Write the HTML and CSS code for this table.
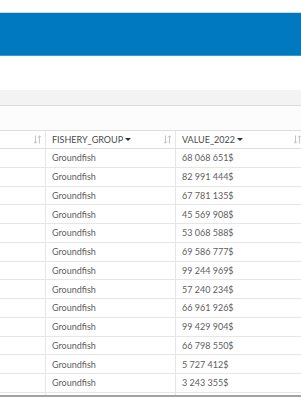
FILE: index.html
```html
<!DOCTYPE html>
<html lang="en">
<head>
    <meta charset="UTF-8">
    <meta name="viewport" content="width=device-width, initial-scale=1.0">
    <title>Table</title>
    <link rel="stylesheet" href="styles.css">
</head>
<body>
    <div class="top-gap"></div>
    <header class="app-bar"></header>
    <div class="spacer"></div>
    <div class="toolbar"></div>
    <div class="table-top"></div>

    <div class="grid">
        <div class="row head">
            <div class="cell c1"><span class="sort"><svg width="7" height="9" viewBox="0 0 7 9"><path d="M1.5 0.5v7.5M0 6.5l1.5 1.8 1.5-1.8M5.5 8.5V1M4 2.5l1.5-1.8 1.5 1.8" fill="none" stroke="#c4c4c4" stroke-width="1"/></svg></span></div>
            <div class="cell c2">FISHERY_GROUP<span class="caret"></span><span class="sort"><svg width="7" height="9" viewBox="0 0 7 9"><path d="M1.5 0.5v7.5M0 6.5l1.5 1.8 1.5-1.8M5.5 8.5V1M4 2.5l1.5-1.8 1.5 1.8" fill="none" stroke="#c4c4c4" stroke-width="1"/></svg></span></div>
            <div class="cell c3">VALUE_2022<span class="caret"></span><span class="sort"><svg width="7" height="9" viewBox="0 0 7 9"><path d="M1.5 0.5v7.5M0 6.5l1.5 1.8 1.5-1.8M5.5 8.5V1M4 2.5l1.5-1.8 1.5 1.8" fill="none" stroke="#c4c4c4" stroke-width="1"/></svg></span></div>
        </div>
        <div class="row"><div class="cell c1"></div><div class="cell c2">Groundfish</div><div class="cell c3">68 068 651$</div></div>
        <div class="row"><div class="cell c1"></div><div class="cell c2">Groundfish</div><div class="cell c3">82 991 444$</div></div>
        <div class="row"><div class="cell c1"></div><div class="cell c2">Groundfish</div><div class="cell c3">67 781 135$</div></div>
        <div class="row"><div class="cell c1"></div><div class="cell c2">Groundfish</div><div class="cell c3">45 569 908$</div></div>
        <div class="row"><div class="cell c1"></div><div class="cell c2">Groundfish</div><div class="cell c3">53 068 588$</div></div>
        <div class="row"><div class="cell c1"></div><div class="cell c2">Groundfish</div><div class="cell c3">69 586 777$</div></div>
        <div class="row"><div class="cell c1"></div><div class="cell c2">Groundfish</div><div class="cell c3">99 244 969$</div></div>
        <div class="row"><div class="cell c1"></div><div class="cell c2">Groundfish</div><div class="cell c3">57 240 234$</div></div>
        <div class="row"><div class="cell c1"></div><div class="cell c2">Groundfish</div><div class="cell c3">66 961 926$</div></div>
        <div class="row"><div class="cell c1"></div><div class="cell c2">Groundfish</div><div class="cell c3">99 429 904$</div></div>
        <div class="row"><div class="cell c1"></div><div class="cell c2">Groundfish</div><div class="cell c3">66 798 550$</div></div>
        <div class="row"><div class="cell c1"></div><div class="cell c2">Groundfish</div><div class="cell c3">5 727 412$</div></div>
        <div class="row"><div class="cell c1"></div><div class="cell c2">Groundfish</div><div class="cell c3">3 243 355$</div></div>
        <div class="row"><div class="cell c1"></div><div class="cell c2"></div><div class="cell c3"></div></div>
    </div>
</body>
</html>
```

FILE: styles.css
```css
body {
    margin: 0;
    background: #ffffff;
    font-family: 'Lato', 'Open Sans', sans-serif;
    color: #5e5e5e;
    overflow: hidden;
}

.top-gap {
    height: 12px;
}

.app-bar {
    height: 42px;
    background: #0079c1;
    border-top: 1px solid #c9dbe9;
    border-bottom: 1px solid #3d97cf;
}

.spacer {
    height: 34px;
}

.toolbar {
    height: 15px;
    background: #f3f3f4;
    border-bottom: 1px solid #d9d9d9;
}

.table-top {
    height: 24px;
    background: #fcfcfc;
}

.grid {
    height: 264px;
    overflow: hidden;
    border-top: 1px solid #dedede;
    border-bottom: 2px solid #a3a3a3;
    width: 306px;
}

.row {
    display: grid;
    grid-template-columns: 46px 130px 130px;
    height: 18.75px;
    box-sizing: border-box;
    border-bottom: 1px solid #e6e6e6;
}

.row.head {
    height: 18px;
    border-bottom: 1px solid #dedede;
}

.cell {
    display: flex;
    align-items: center;
    padding: 0 4px 0 6px;
    border-right: 1px solid #e6e6e6;
    font-size: 9px;
    white-space: nowrap;
    overflow: hidden;
}

.head .cell {
    color: #4a4a4a;
}

.caret {
    display: inline-block;
    margin-left: 2px;
    border-left: 3px solid transparent;
    border-right: 3px solid transparent;
    border-top: 3px solid #333333;
}

.sort {
    margin-left: auto;
    display: flex;
}
```
